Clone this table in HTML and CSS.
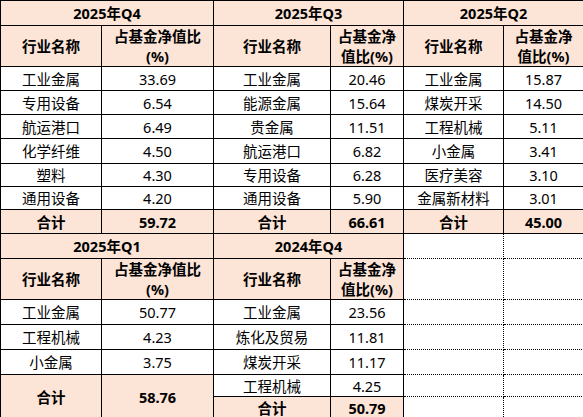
FILE: index.html
```html
<!DOCTYPE html>
<html lang="zh-CN">
<head>
  <meta charset="UTF-8">
  <title>行业配置</title>
  <link rel="stylesheet" href="styles.css">
</head>
<body>
  <table class="sheet">
    <colgroup>
      <col class="c1"><col class="c2"><col class="c3"><col class="c4"><col class="c5"><col class="c6">
    </colgroup>
    <tbody>
      <!-- Quarter titles -->
      <tr class="r-title">
        <td class="head" colspan="2">2025年Q4</td>
        <td class="head" colspan="2">2025年Q3</td>
        <td class="head" colspan="2">2025年Q2</td>
      </tr>
      <tr class="r-head">
        <td class="head">行业名称</td>
        <td class="head">占基金净值比<br>(%)</td>
        <td class="head">行业名称</td>
        <td class="head">占基金净<br>值比(%)</td>
        <td class="head">行业名称</td>
        <td class="head">占基金净<br>值比(%)</td>
      </tr>
      <tr class="r-a"><td>工业金属</td><td>33.69</td><td>工业金属</td><td>20.46</td><td>工业金属</td><td>15.87</td></tr>
      <tr class="r-a"><td>专用设备</td><td>6.54</td><td>能源金属</td><td>15.64</td><td>煤炭开采</td><td>14.50</td></tr>
      <tr class="r-a"><td>航运港口</td><td>6.49</td><td>贵金属</td><td>11.51</td><td>工程机械</td><td>5.11</td></tr>
      <tr class="r-b"><td>化学纤维</td><td>4.50</td><td>航运港口</td><td>6.82</td><td>小金属</td><td>3.41</td></tr>
      <tr class="r-c"><td>塑料</td><td>4.30</td><td>专用设备</td><td>6.28</td><td>医疗美容</td><td>3.10</td></tr>
      <tr class="r-c"><td>通用设备</td><td>4.20</td><td>通用设备</td><td>5.90</td><td>金属新材料</td><td>3.01</td></tr>
      <tr class="r-a">
        <td class="head">合计</td><td class="head">59.72</td>
        <td class="head">合计</td><td class="head">66.61</td>
        <td class="head">合计</td><td class="head">45.00</td>
      </tr>

      <tr class="r-title">
        <td class="head" colspan="2">2025年Q1</td>
        <td class="head" colspan="2">2024年Q4</td>
        <td class="blank"></td><td class="blank"></td>
      </tr>
      <tr class="r-head">
        <td class="head">行业名称</td>
        <td class="head">占基金净值比<br>(%)</td>
        <td class="head">行业名称</td>
        <td class="head">占基金净<br>值比(%)</td>
        <td class="blank"></td><td class="blank"></td>
      </tr>
      <tr class="r-d"><td>工业金属</td><td>50.77</td><td>工业金属</td><td>23.56</td><td class="blank"></td><td class="blank"></td></tr>
      <tr class="r-d"><td>工程机械</td><td>4.23</td><td>炼化及贸易</td><td>11.81</td><td class="blank"></td><td class="blank"></td></tr>
      <tr class="r-d"><td>小金属</td><td>3.75</td><td>煤炭开采</td><td>11.17</td><td class="blank"></td><td class="blank"></td></tr>
      <tr class="r-e">
        <td class="head" rowspan="2">合计</td><td class="head" rowspan="2">58.76</td>
        <td>工程机械</td><td>4.25</td>
        <td class="blank"></td><td class="blank"></td>
      </tr>
      <tr class="r-e">
        <td class="head">合计</td><td class="head">50.79</td>
        <td class="blank"></td><td class="blank"></td>
      </tr>
    </tbody>
  </table>
</body>
</html>
```

FILE: styles.css
```css
* { margin: 0; padding: 0; box-sizing: border-box; }
body {
  background: #fff;
  font-family: "Noto Sans", "Noto Sans CJK SC", sans-serif;
  color: #000;
}

/* Sheet grid */
.sheet {
  border-collapse: collapse;
  table-layout: fixed;
  width: 583px;
  font-size: 14.5px;
}
.c1 { width: 101px; }
.c2 { width: 112px; }
.c3 { width: 117px; }
.c4 { width: 73px; }
.c5 { width: 100px; }
.c6 { width: 80px; }

.sheet td {
  border: 1px solid #000;
  text-align: center;
  vertical-align: middle;
  padding: 0 2px;
  line-height: 20px;
  white-space: nowrap;
}

/* Row heights */
.r-title { height: 25px; }
.r-head { height: 40px; }
.r-a { height: 24px; }
.r-b { height: 25px; }
.r-c { height: 23px; }
.r-d { height: 25px; }
.r-e { height: 22px; }

/* Peach header / total cells */
.sheet td.head {
  background: #fce4d6;
  font-weight: 700;
}

/* Unused cells */
.sheet td.blank {
  border: 1px dotted #000;
}
```
